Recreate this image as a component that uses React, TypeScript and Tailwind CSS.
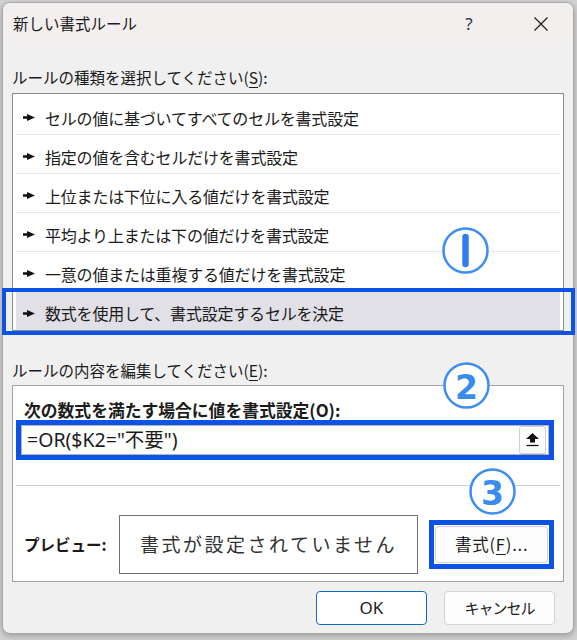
import React from "react";

const items = [
  "セルの値に基づいてすべてのセルを書式設定",
  "指定の値を含むセルだけを書式設定",
  "上位または下位に入る値だけを書式設定",
  "平均より上または下の値だけを書式設定",
  "一意の値または重複する値だけを書式設定",
  "数式を使用して、書式設定するセルを決定",
];

function Arrow() {
  return (
    <svg width="12" height="7" viewBox="0 0 12 7" className="shrink-0">
      <polygon points="0,2.2 4,2.2 4,0 12,3.5 4,7 4,4.8 0,4.8" fill="#111" />
    </svg>
  );
}

function CircleNum({ n }: { n: number }) {
  return (
    <svg width="50" height="50" viewBox="0 0 50 50">
      <circle cx="24.5" cy="24.5" r="22" fill="#ffffff" stroke="#3d8ef0" strokeWidth="2.5" />
      {n === 1 ? (
        <line x1="24.5" y1="11" x2="24.5" y2="38" stroke="#2f80ec" strokeWidth="6.5" strokeLinecap="round" />
      ) : (
        <text
          x="24.5"
          y="26"
          textAnchor="middle"
          dominantBaseline="central"
          fontFamily="DejaVu Sans, sans-serif"
          fontWeight="bold"
          fontSize="33"
          fill="#3a8bee"
        >
          {n}
        </text>
      )}
    </svg>
  );
}

export default function App() {
  return (
    <div className="relative w-[577px] h-[640px] bg-[#d2d2d2] pt-[2px] pl-[2px] overflow-hidden font-['Noto_Sans_CJK_JP',sans-serif] text-[#1b1b1b]">
      <div className="w-[572px] h-[632px] rounded-[8px] border border-[#a9a9a9] bg-[#f0f0f0] overflow-hidden flex flex-col shadow-[0_2px_6px_rgba(0,0,0,0.25)]">
        {/* title bar */}
        <div className="h-[41px] bg-[#f4efef] flex items-center pl-[10px] pr-[12px] shrink-0">
          <span className="text-[15.5px] leading-none">新しい書式ルール</span>
          <div className="ml-auto flex items-center">
            <span className="w-[40px] text-center text-[17px] leading-none font-['Noto_Sans',sans-serif] text-[#333]">?</span>
            <div className="w-[40px] ml-[32px] flex justify-center">
              <svg width="14" height="14" viewBox="0 0 14 14">
                <path d="M0.5 0.5 L13.5 13.5 M13.5 0.5 L0.5 13.5" stroke="#1a1a1a" strokeWidth="1.2" />
              </svg>
            </div>
          </div>
        </div>

        {/* body */}
        <div className="flex-1 flex flex-col px-[9px] pt-[22px]">
          <div className="h-[22px] leading-[22px] text-[15.5px]">
            ルールの種類を選択してください(<span className="underline underline-offset-[3px]">S</span>):
          </div>

          <div className="mt-[5px] border border-[#8c8c8c] bg-white pt-[2px] px-[3px]">
            {items.map((t, i) => (
              <div
                key={i}
                className={
                  i < 5
                    ? "h-[39px] flex items-center pl-[7px] pt-[5px] border-b border-[#e9e9e9]"
                    : "h-[39px] flex items-center pl-[7px] pt-[5px] bg-[#e1e0e6]"
                }
              >
                <Arrow />
                <span className="ml-[10px] text-[16px] tracking-[-0.2px] leading-none">{t}</span>
              </div>
            ))}
          </div>

          <div className="mt-[28px] h-[22px] leading-[22px] text-[15.5px]">
            ルールの内容を編集してください(<span className="underline underline-offset-[3px]">E</span>):
          </div>

          <div className="mt-[4px] border border-[#a3a3a3] bg-white pt-[14px] pl-[3px] pr-[9px] pb-[7px] flex flex-col">
            <div className="ml-[8px] h-[20px] leading-[20px] text-[16.8px] font-bold">
              次の数式を満たす場合に値を書式設定(<span className="underline underline-offset-[3px]">O</span>):
            </div>
            <div className="h-[40px] border-[5px] border-[#0a53e4]">
              <div className="h-full border border-[#b4b4b4] flex items-center pl-[5px] pr-[2px]">
                <span className="text-[19.5px] leading-none font-['Noto_Sans','Noto_Sans_CJK_JP',sans-serif]">
                  =OR($K2="不要")
                </span>
                <div className="ml-auto w-[27px] h-[28px] rounded-[3px] border border-[#cfcfcf] bg-white flex items-center justify-center shadow-[0_1px_0_rgba(0,0,0,0.08)]">
                  <svg width="13" height="14" viewBox="0 0 13 14">
                    <polygon points="6.5,0 13,6 9,6 9,9.5 4,9.5 4,6 0,6" fill="#111" />
                    <line x1="0.5" y1="12.5" x2="12.5" y2="12.5" stroke="#111" strokeWidth="1.3" />
                  </svg>
                </div>
              </div>
            </div>

            <div className="mt-[25px] h-px bg-[#cfcfcf] -mr-[6px]" />

            <div className="mt-[29px] h-[59px] flex items-center">
              <div className="ml-[8px] w-[95px] text-[15.5px] font-bold leading-none">プレビュー:</div>
              <div className="w-[300px] h-[59px] border border-[#707070] flex items-center justify-center text-[19px] tracking-[2.5px] text-[#333]">
                書式が設定されていません
              </div>
              <div className="ml-[11px] w-[125px] h-[49px] border-[5px] border-[#0a53e4] p-[1px]">
                <div className="w-full h-full rounded-[4px] border border-[#d0d0d0] bg-[#fdfdfd] flex items-center justify-center text-[16.5px] tracking-[0.8px]">
                  書式(<span className="underline underline-offset-[3px]">F</span>)...
                </div>
              </div>
            </div>
          </div>

          <div className="mt-[9px] pr-[9px] flex justify-end gap-[17px]">
            <div className="w-[111px] h-[34px] rounded-[4px] border border-[#1468c8] bg-white flex items-center justify-center text-[17px] font-['Noto_Sans',sans-serif]">
              OK
            </div>
            <div className="w-[111px] h-[34px] rounded-[4px] border border-[#d3d3d3] bg-[#fdfdfd] flex items-center justify-center text-[15px] tracking-[-1px]">
              キャンセル
            </div>
          </div>
        </div>
      </div>

      {/* annotations */}
      <div className="absolute left-[2px] top-[288px] w-[573px] h-[47px] border-[4px] border-[#0a53e4]" />
      <div className="absolute left-[441px] top-[226px]">
        <CircleNum n={1} />
      </div>
      <div className="absolute left-[442px] top-[361px]">
        <CircleNum n={2} />
      </div>
      <div className="absolute left-[468px] top-[467px]">
        <CircleNum n={3} />
      </div>
    </div>
  );
}
